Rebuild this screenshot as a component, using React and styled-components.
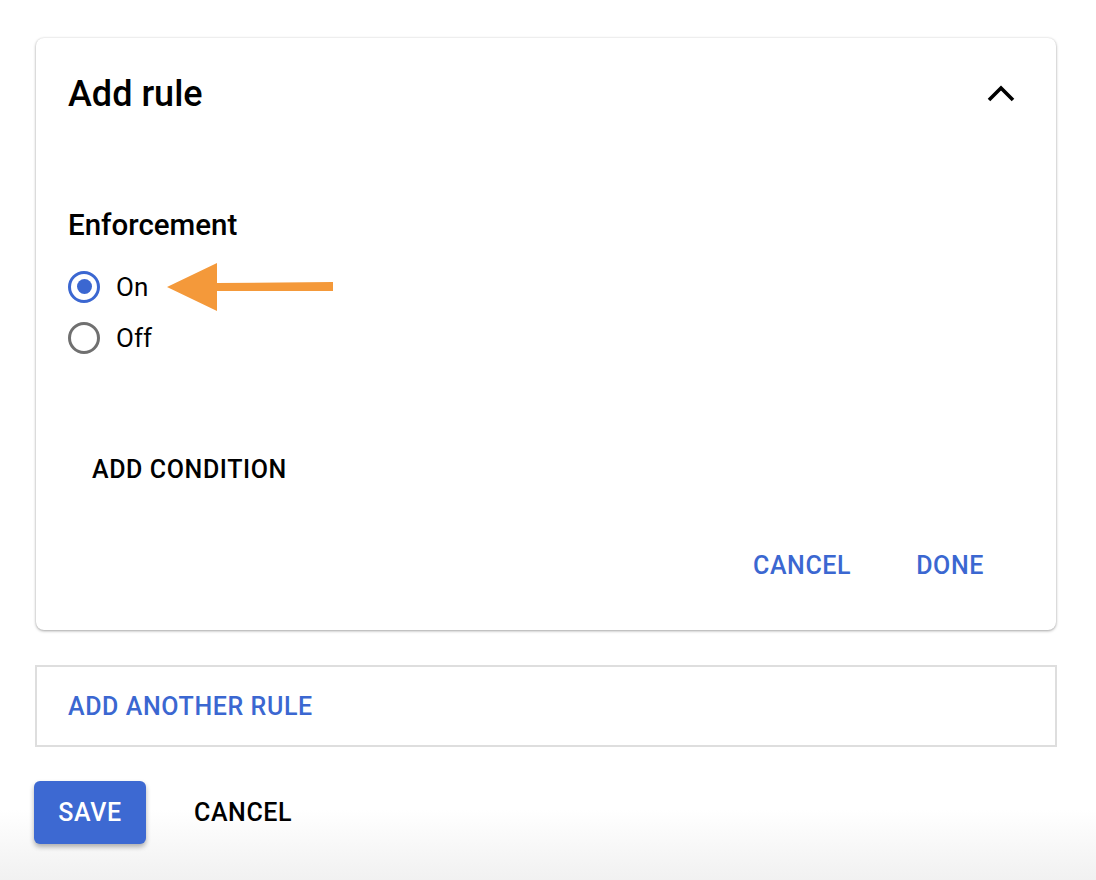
import styled, { createGlobalStyle } from "styled-components";

const Global = createGlobalStyle`
  html, body {
    margin: 0;
    padding: 0;
  }
  body {
    font-family: Roboto, "Liberation Sans", sans-serif;
    background: #fff;
  }
`;

function Chevron() {
    return (
        <svg width="30" height="18" viewBox="0 0 30 18">
            <path d="M3 15 L15 3 L27 15" fill="none" stroke="#000" strokeWidth="3.6" />
        </svg>
    );
}

function Arrow() {
    return (
        <svg width="168" height="50" viewBox="0 0 168 50">
            <polygon points="0,25 50,1 50,21 166,20 166,29 50,29 50,49" fill="#f4993a" />
        </svg>
    );
}

function App() {
    return (
        <>
            <Global />
            <Page>
                <Card>
                    <CardHead>
                        <Title>Add rule</Title>
                        <Toggle><Chevron /></Toggle>
                    </CardHead>
                    <Section>
                        <Label>Enforcement</Label>
                        <Options>
                            <Option>
                                <Radio checked />
                                <OptionText>On</OptionText>
                                <Pointer><Arrow /></Pointer>
                            </Option>
                            <Option>
                                <Radio />
                                <OptionText>Off</OptionText>
                            </Option>
                        </Options>
                    </Section>
                    <ConditionRow>
                        <TextButton>ADD CONDITION</TextButton>
                    </ConditionRow>
                    <Actions>
                        <TextButton blue>CANCEL</TextButton>
                        <TextButton blue>DONE</TextButton>
                    </Actions>
                </Card>
                <AddBox>
                    <LinkText>ADD ANOTHER RULE</LinkText>
                </AddBox>
                <Footer>
                    <SaveButton>SAVE</SaveButton>
                    <TextButton>CANCEL</TextButton>
                </Footer>
            </Page>
        </>
    );
}

const Page = styled.div`
    min-height: 880px;
    box-sizing: border-box;
    padding: 38px 39px 0 35px;
    background: linear-gradient(to bottom, #fff 0, #fff 810px, #f1f1f1 880px);
`

const Card = styled.div`
    margin-left: 1px;
    width: 1020px;
    height: 592px;
    box-sizing: border-box;
    background: #fff;
    border-radius: 8px;
    box-shadow: 0 1px 3px rgba(0, 0, 0, 0.35), 0 0 2px rgba(0, 0, 0, 0.08);
    padding: 36px 40px 0 32px;
`

const CardHead = styled.div`
    display: flex;
    align-items: center;
    justify-content: space-between;
    height: 40px;
`

const Title = styled.h2`
    margin: 0;
    font-size: 36px;
    font-weight: 500;
    color: #000;
`

const Toggle = styled.div`
    display: flex;
    align-items: center;
`

const Section = styled.div`
    margin-top: 95px;
`

const Label = styled.div`
    font-size: 29.5px;
    font-weight: 500;
    color: #000;
    line-height: 32px;
`

const Options = styled.div`
    margin-top: 28px;
    display: flex;
    flex-direction: column;
    gap: 16px;
`

const Option = styled.div`
    display: flex;
    align-items: center;
    height: 35px;
`

const Radio = styled.span`
    width: 32px;
    height: 32px;
    box-sizing: border-box;
    border-radius: 50%;
    border: 3px solid ${p => (p.checked ? "#3b67d1" : "#707070")};
    display: flex;
    align-items: center;
    justify-content: center;

    &::after {
        content: "";
        width: 15px;
        height: 15px;
        border-radius: 50%;
        background: #3b67d1;
        display: ${p => (p.checked ? "block" : "none")};
    }
`

const OptionText = styled.span`
    margin-left: 16px;
    font-size: 26px;
    color: #000;
`

const Pointer = styled.span`
    display: flex;
    margin-left: 19px;
    margin-top: 1px;
`

const ConditionRow = styled.div`
    margin-top: 84px;
`

const TextButton = styled.button`
    border: none;
    background: none;
    padding: 0 24px;
    height: 60px;
    font-family: Roboto, "Liberation Sans", sans-serif;
    font-size: 25px;
    font-weight: 500;
    letter-spacing: 0.6px;
    color: ${p => (p.blue ? "#3b67d1" : "#000")};
`

const Actions = styled.div`
    display: flex;
    justify-content: flex-end;
    gap: 17px;
    margin-top: 36px;
    margin-right: 8px;
`

const AddBox = styled.div`
    margin-top: 35px;
    width: 1022px;
    height: 82px;
    box-sizing: border-box;
    border: 2px solid #dedede;
    display: flex;
    align-items: center;
    padding-left: 31px;
`

const LinkText = styled.span`
    font-size: 25px;
    font-weight: 500;
    color: #3b67d1;
    letter-spacing: 0.6px;
`

const Footer = styled.div`
    margin-top: 34px;
    display: flex;
    align-items: center;
    gap: 24px;
`

const SaveButton = styled.button`
    width: 112px;
    height: 63px;
    margin-left: -1px;
    border: none;
    border-radius: 6px;
    background: #3d69d2;
    color: #fff;
    font-family: Roboto, "Liberation Sans", sans-serif;
    font-size: 25px;
    font-weight: 500;
    letter-spacing: 0.6px;
    box-shadow: 0 3px 5px rgba(0, 0, 0, 0.3);
`

export default App;
